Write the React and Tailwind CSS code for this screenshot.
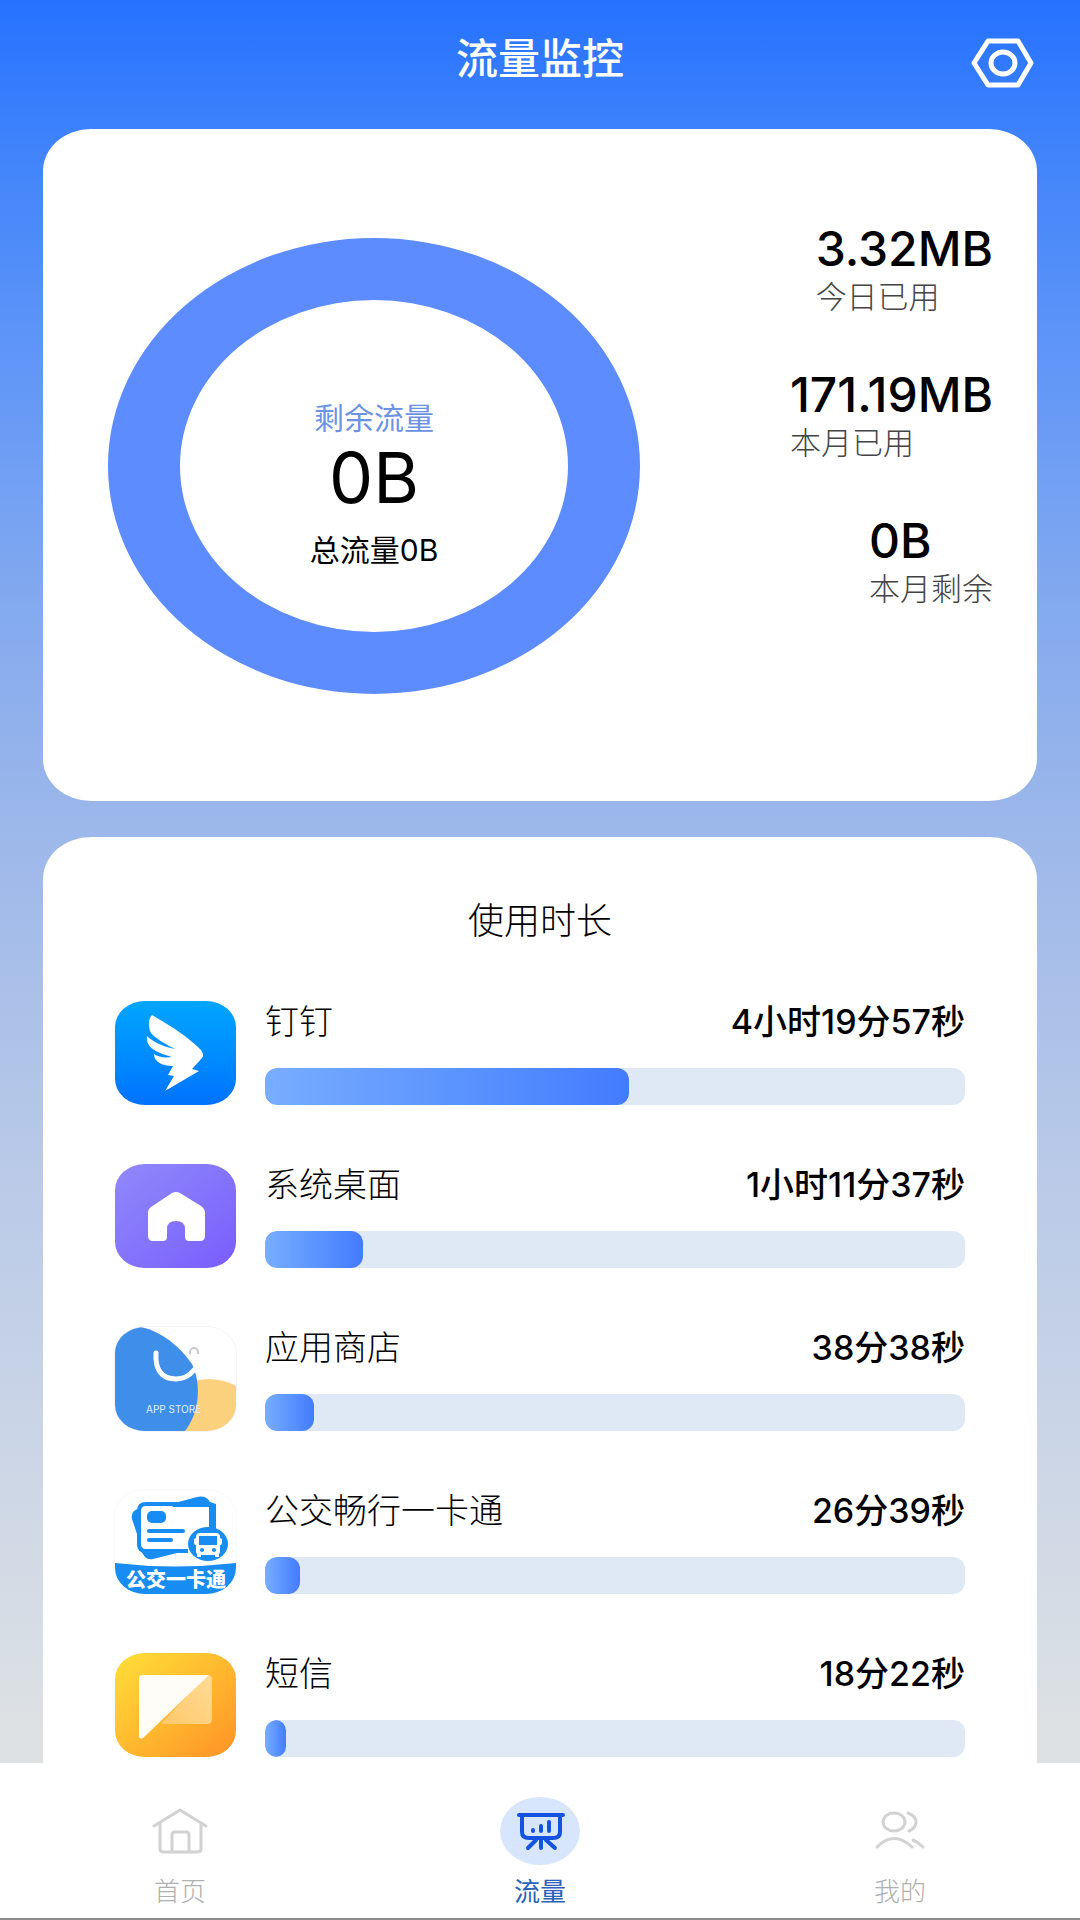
const apps = [
  { name: "钉钉", time: "4小时19分57秒", pct: 52, Icon: DingIcon },
  { name: "系统桌面", time: "1小时11分37秒", pct: 14, Icon: LauncherIcon },
  { name: "应用商店", time: "38分38秒", pct: 7, Icon: StoreIcon },
  { name: "公交畅行一卡通", time: "26分39秒", pct: 5, Icon: BusCardIcon },
  { name: "短信", time: "18分22秒", pct: 3, Icon: SmsIcon },
];

const stats = [
  { value: "3.32MB", label: "今日已用" },
  { value: "171.19MB", label: "本月已用" },
  { value: "0B", label: "本月剩余" },
];

function Tile({ children, className }) {
  return (
    <span className={`block h-26 w-[121px] shrink-0 overflow-hidden rounded-[30px/26px] ${className}`}>
      <svg viewBox="0 0 121 104" className="size-full" aria-hidden="true">
        {children}
      </svg>
    </span>
  );
}

function DingIcon() {
  return (
    <Tile className="bg-linear-to-b from-[#00a6ff] to-[#0072ff]">
      <path
        fill="#fff"
        d="M37 14C33 18 33 26 36 32C42 39 51 43 60 48C49 46 38 41 32 35C31 43 36 48 43 51C49 54 54 55 57 56C50 57 43 56 39 53C39 61 47 65 58 65L53 74L59 75L50 90L84 70L77 68L87 57C89 55 88 52 86 49C72 35 56 25 37 14Z"
      />
    </Tile>
  );
}

function LauncherIcon() {
  return (
    <Tile className="bg-linear-to-br from-[#9089fa] to-[#7a5cfd]">
      <path
        fill="#fff"
        d="M57 29Q61 27 65 29L86 42Q90 45 90 49V72Q90 77 85 77H74Q70 77 70 73V65Q70 57 61 57Q52 57 52 65V73Q52 77 48 77H38Q33 77 33 72V49Q33 45 36 43Z"
      />
    </Tile>
  );
}

function StoreIcon() {
  return (
    <Tile className="bg-white ring-1 ring-gray-100">
      <ellipse cx="94" cy="86" rx="44" ry="34" fill="#fcd17e" />
      <path fill="#3e8eea" d="M0 0H26C48 5 65 20 77 37C87 58 84 86 70 104H0Z" />
      <path d="M41 26C40 42 46 52 61 52C69 52 75 48 79 43" fill="none" stroke="#fff" strokeWidth="5" strokeLinecap="round" />
      <path d="M75 27V25A4 4 0 0 1 83 25V27" fill="none" stroke="#c9c9cf" strokeWidth="2" />
      <text x="31" y="86" fill="#e3efff" fontSize="10" fontFamily="Inter, sans-serif">
        APP STORE
      </text>
    </Tile>
  );
}

function BusCardIcon() {
  return (
    <Tile className="bg-white ring-1 ring-gray-50">
      <g fill="#178cf3">
        <path d="M56 14L82 7Q91 5 95 12L101 14V42H94V17H58ZM26 18Q15 20 17 29L24 50V24ZM26 61L30 67Q33 70 38 69L66 62Z" />
        <rect x="32" y="21" width="19" height="12" rx="5" />
        <rect x="32" y="39" width="38" height="4" rx="2" />
        <rect x="32" y="48" width="26" height="4" rx="2" />
        <path d="M73 61H31Q24 61 24 54V21Q24 14 31 14H92Q99 14 99 21V35" fill="none" stroke="#178cf3" strokeWidth="4" />
        <ellipse cx="93" cy="54" rx="20" ry="17" />
        <path d="M0 73Q60 80 121 73V104H0Z" />
      </g>
      <rect x="81" y="43" width="24" height="22" rx="4" fill="#fff" />
      <rect x="79" y="48" width="28" height="7" rx="2" fill="#fff" />
      <rect x="84" y="46" width="18" height="9" fill="#178cf3" />
      <circle cx="87" cy="60" r="2" fill="#178cf3" />
      <circle cx="99" cy="60" r="2" fill="#178cf3" />
      <path d="M84 64V67M102 64V67" stroke="#fff" strokeWidth="4" />
      <text x="61" y="97" textAnchor="middle" fill="#fff" fontSize="20" fontWeight="900" fontFamily="'Noto Sans CJK SC', sans-serif">
        公交一卡通
      </text>
    </Tile>
  );
}

function SmsIcon() {
  return (
    <Tile className="bg-linear-to-br from-[#fddf38] to-[#ff9226]">
      <defs>
        <linearGradient id="flap" x1="0" y1="1" x2="1" y2="0">
          <stop offset="0" stopColor="#ffc86c" />
          <stop offset="1" stopColor="#ffdc94" />
        </linearGradient>
      </defs>
      <path d="M92 22Q97 22 97 27V66Q97 71 92 71H46Z" fill="url(#flap)" />
      <path d="M28 22H94L28 85Q24 87 24 82V26Q24 22 28 22Z" fill="#fffdf8" />
    </Tile>
  );
}

function HomeGlyph() {
  return (
    <svg viewBox="0 0 58 48" className="h-12 w-[58px]" fill="none" stroke="#d2d2d2" strokeWidth="3" strokeLinejoin="round" strokeLinecap="round" aria-hidden="true">
      <path d="M3 19L29 3L55 19M9 17V42Q9 45 13 45H46Q50 45 50 42V17M21 44V28Q21 25 24 25H35Q38 25 38 28V44" />
    </svg>
  );
}

function BoardGlyph() {
  return (
    <span className="flex h-[68px] w-20 items-center justify-center rounded-[50%] bg-[#d7e5fd]">
      <svg viewBox="0 0 50 40" className="h-10 w-[50px]" fill="none" stroke="#1453e0" strokeWidth="4" strokeLinecap="round" aria-hidden="true">
        <path d="M4 4H48M7 5V21Q7 27 14 27H38Q45 27 45 21V5M21 29L13 37M31 29L40 37M26 28V37" />
        <path d="M18 19V20M26 15V20M34 11V20" />
      </svg>
    </span>
  );
}

function PeopleGlyph() {
  return (
    <svg viewBox="0 0 54 42" className="h-[42px] w-[54px]" fill="none" stroke="#d2d2d2" strokeWidth="3" strokeLinecap="round" aria-hidden="true">
      <ellipse cx="21" cy="12" rx="11" ry="9" />
      <path d="M35 3Q43 6 43 12Q43 18 36 21M4 37Q21 20 39 37M40 30Q45 32 50 37" />
    </svg>
  );
}

const tabs = [
  { label: "首页", Glyph: HomeGlyph },
  { label: "流量", Glyph: BoardGlyph, active: true },
  { label: "我的", Glyph: PeopleGlyph },
];

export default function App() {
  return (
    <div className="flex h-screen flex-col overflow-hidden bg-[linear-gradient(to_bottom,#2672ff_0%,#4184fb_8%,#5e95f8_18%,#82a9ef_31%,#9ab6ea_42%,#b8c9e8_60%,#dde1e4_90%)] font-[Inter,'Noto_Sans_CJK_SC',sans-serif] text-black">
      <header className="grid h-[129px] shrink-0 grid-cols-[1fr_auto_1fr] items-start px-11">
        <h1 className="col-start-2 pt-8 text-[42px] leading-[54px] font-medium text-white">流量监控</h1>
        <button type="button" aria-label="设置" className="mt-[37px] justify-self-end">
          <svg viewBox="0 0 66 52" className="h-[52px] w-[66px]" fill="none" stroke="#fff" strokeWidth="5" strokeLinejoin="round" aria-hidden="true">
            <path d="M18 4H48L61 26L48 48H18L4 26Z" />
            <ellipse cx="33" cy="26" rx="12" ry="11" />
          </svg>
        </button>
      </header>

      <main className="flex min-h-0 grow flex-col gap-9 overflow-hidden px-[43px]">
        <section className="flex h-[672px] shrink-0 items-start justify-between rounded-[48px/42px] bg-white pr-11 pl-16">
          <div className="mt-[109px] grid place-items-center">
            <svg viewBox="0 0 534 456" className="col-start-1 row-start-1 h-[456px] w-[534px]" aria-hidden="true">
              <path fillRule="evenodd" fill="#5c8cff" d="M1 228A266 228 0 1 0 533 228A266 228 0 1 0 1 228ZM73 228A194 166 0 1 1 461 228A194 166 0 1 1 73 228Z" />
            </svg>
            <div className="col-start-1 row-start-1 flex flex-col items-center pt-10">
              <p className="text-[30px] leading-10 text-[#6c92e3]">剩余流量</p>
              <p className="text-[70px] leading-20">0B</p>
              <p className="mt-2 text-[30px] leading-12">总流量0B</p>
            </div>
          </div>
          <dl className="mt-[92px] flex flex-col items-end gap-[50px]">
            {stats.map((s) => (
              <div key={s.label} className="flex flex-col-reverse">
                <dt className="text-[31px] leading-10 font-light text-[#444]">{s.label}</dt>
                <dd className="text-[48px] leading-14 font-medium">{s.value}</dd>
              </div>
            ))}
          </dl>
        </section>

        <section className="grow rounded-t-[48px_42px] bg-white px-[72px] pt-15">
          <h2 className="text-center text-[36px] leading-12 font-light">使用时长</h2>
          <ul className="mt-14 flex flex-col gap-[59px]">
            {apps.map(({ name, time, pct, Icon }) => (
              <li key={name} className="flex gap-[29px]">
                <Icon />
                <div className="flex h-26 min-w-0 grow flex-col justify-between">
                  <div className="flex items-center justify-between leading-[42px]">
                    <span className="text-[34px] font-light">{name}</span>
                    <span className="text-[34px] font-medium">{time}</span>
                  </div>
                  <div role="progressbar" aria-label={name} aria-valuenow={pct} aria-valuemin={0} aria-valuemax={100} className="h-[37px] overflow-hidden rounded-xl bg-[#dfe9f5]">
                    <div className="h-full rounded-xl bg-linear-to-r from-[#78adff] to-[#437bff]" style={{ width: `${pct}%` }} />
                  </div>
                </div>
              </li>
            ))}
          </ul>
        </section>
      </main>

      <nav className="grid h-[157px] shrink-0 grid-cols-3 border-b-2 border-[#8b8b8b] bg-white pt-8">
        {tabs.map(({ label, Glyph, active }) => (
          <button key={label} type="button" aria-current={active ? "page" : undefined} className="flex flex-col items-center gap-2">
            <span className="flex h-[72px] items-center">
              <Glyph />
            </span>
            <span className={`text-[26px] leading-[34px] ${active ? "text-[#2a62b8]" : "font-light text-[#b0b0b0]"}`}>{label}</span>
          </button>
        ))}
      </nav>
    </div>
  );
}
